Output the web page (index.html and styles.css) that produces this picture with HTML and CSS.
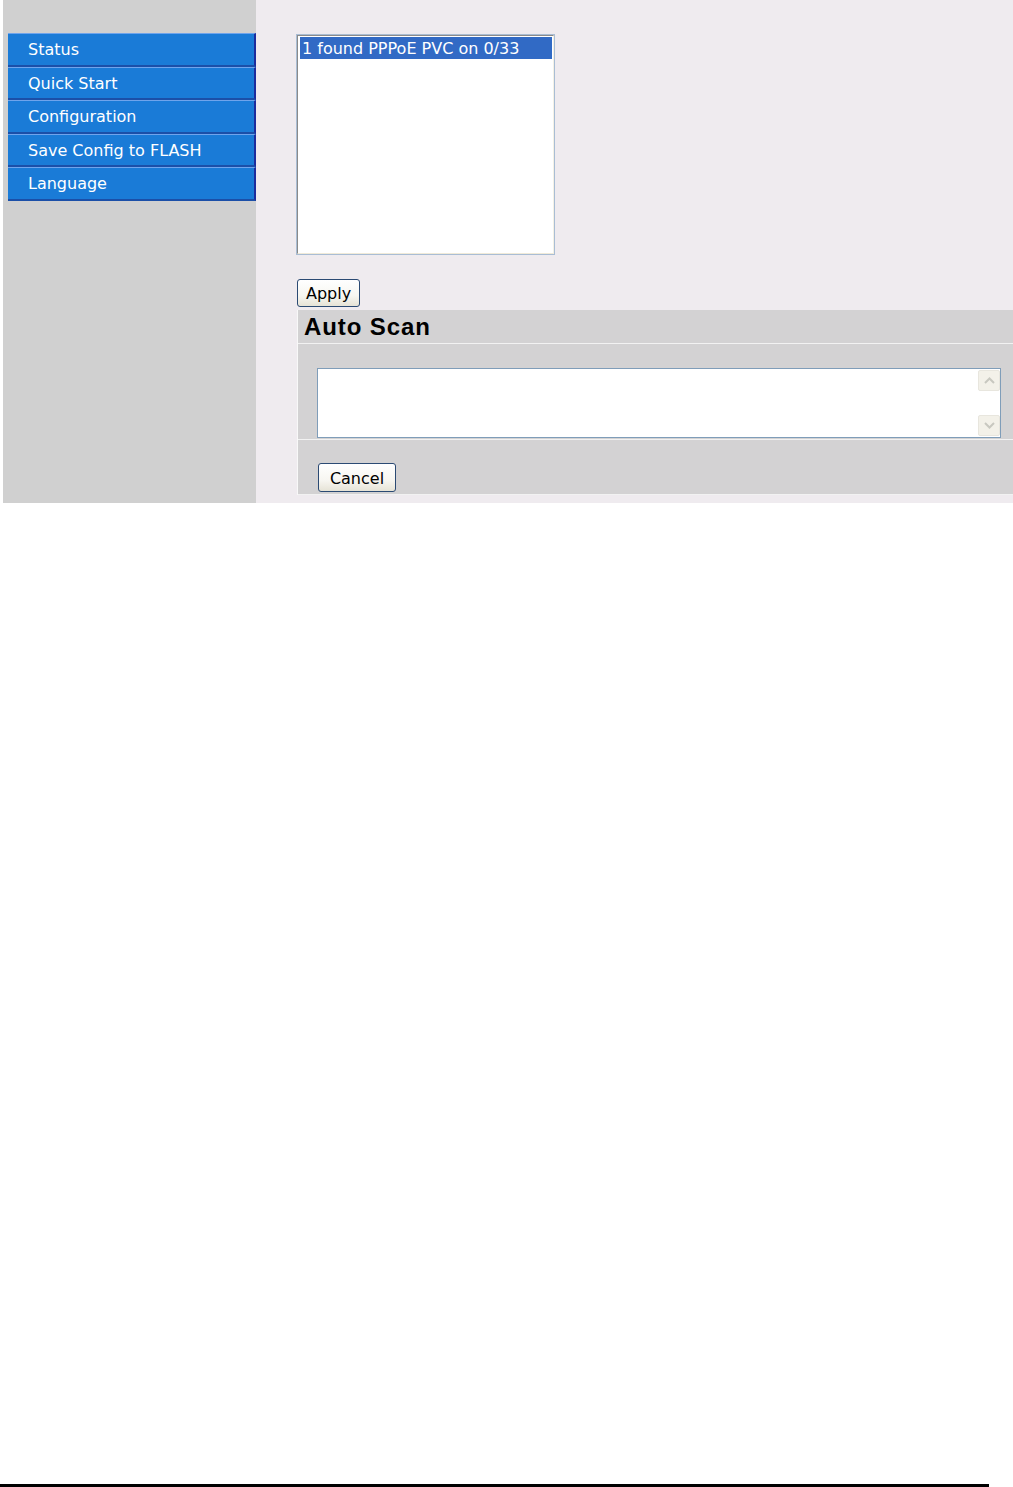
FILE: index.html
```html
<!DOCTYPE html>
<html>
<head>
<meta charset="utf-8">
<link rel="stylesheet" href="styles.css">
</head>
<body>
<div class="page">
  <div class="shot">
    <nav class="sidebar">
      <div class="menu">
        <div class="item">Status</div>
        <div class="item">Quick Start</div>
        <div class="item">Configuration</div>
        <div class="item">Save Config to FLASH</div>
        <div class="item">Language</div>
      </div>
    </nav>
    <main class="content">
      <div class="listbox">
        <div class="listinner">
          <div class="opt sel">1 found PPPoE PVC on 0/33</div>
        </div>
      </div>
      <div class="apply-row"><button class="btn">Apply</button></div>
      <section class="panel">
        <div class="panel-head">Auto Scan</div>
        <div class="panel-body">
          <div class="textarea">
            <div class="ta-text"></div>
            <div class="scroll">
              <div class="sbtn">
                <svg width="11" height="7" viewBox="0 0 11 7"><path d="M1 6 L5.5 1.5 L10 6" fill="none" stroke="#c8c8c0" stroke-width="2"/></svg>
              </div>
              <div class="strack"></div>
              <div class="sbtn">
                <svg width="11" height="7" viewBox="0 0 11 7"><path d="M1 1 L5.5 5.5 L10 1" fill="none" stroke="#c8c8c0" stroke-width="2"/></svg>
              </div>
            </div>
          </div>
        </div>
        <div class="panel-foot"><button class="btn cancel">Cancel</button></div>
      </section>
    </main>
  </div>
  <div class="rule"></div>
</div>
</body>
</html>
```
FILE: styles.css
```css
html, body {
  margin: 0;
  padding: 0;
  background: #ffffff;
}
.page {
  width: 1013px;
}
.shot {
  display: flex;
  height: 503px;
  padding-left: 3px;
}
.sidebar {
  width: 253px;
  background: #d0d0d0;
  padding-top: 33px;
  box-sizing: border-box;
}
.menu {
  margin-left: 5px;
  display: flex;
  flex-direction: column;
}
.item {
  height: 33.6px;
  box-sizing: border-box;
  background: #1a7bd7;
  border-top: 1px solid #6fa4ec;
  border-bottom: 2px solid #1b4fa8;
  border-right: 2px solid #1c2c9c;
  color: #ffffff;
  font-family: "DejaVu Sans", sans-serif;
  font-size: 16px;
  line-height: 32px;
  padding-left: 20px;
  white-space: nowrap;
}
.content {
  flex: 1;
  background: #efebef;
  padding-left: 40px;
  padding-top: 34px;
  box-sizing: border-box;
}
.listbox {
  width: 259px;
  height: 221px;
  box-sizing: border-box;
  border: 1px solid #a9bdd4;
  background: #ffffff;
}
.listinner {
  height: 100%;
  box-sizing: border-box;
  border-top: 1px solid #8a8a8a;
  border-left: 1px solid #8a8a8a;
  border-right: 1px solid #f4f1e6;
  border-bottom: 1px solid #f0ead8;
  padding: 1px 1px 0 2px;
}
.opt {
  height: 22px;
  font-family: "DejaVu Sans", sans-serif;
  font-size: 16px;
  line-height: 24px;
  padding-left: 2px;
  white-space: nowrap;
  color: #000;
  overflow: hidden;
}
.opt.sel {
  background: #316ac5;
  color: #ffffff;
}
.apply-row {
  margin-top: 24px;
  padding-left: 1px;
  height: 31px;
}
.btn {
  font-family: "DejaVu Sans", sans-serif;
  font-size: 16px;
  color: #000;
  height: 28px;
  padding: 2px 8px 0;
  border: 1px solid #2b4a73;
  border-radius: 3px;
  background: linear-gradient(#ffffff 0%, #f7f6f1 60%, #e6e3d6 100%);
  line-height: 24px;
  margin: 0;
}
.cancel {
  width: 78px;
  height: 29px;
}
.panel {
  margin-left: 1px;
  border-left: 1px solid #f8f8f8;
  background: #d3d2d3;
}
.panel-head {
  height: 34px;
  box-sizing: border-box;
  border-bottom: 1px solid #f2f2f2;
  font-family: "Liberation Sans", Arial, sans-serif;
  font-weight: bold;
  font-size: 24px;
  letter-spacing: 0.9px;
  line-height: 34px;
  padding-left: 6px;
  color: #000;
}
.panel-body {
  height: 96px;
  box-sizing: border-box;
  padding: 24px 12px 0 19px;
  border-bottom: 1px solid #f2f2f2;
}
.textarea {
  height: 70px;
  box-sizing: border-box;
  border: 1px solid #7f9db9;
  background: #ffffff;
  display: flex;
}
.ta-text {
  flex: 1;
}
.scroll {
  width: 22px;
  display: flex;
  flex-direction: column;
  padding: 1px 0;
}
.sbtn {
  height: 21px;
  box-sizing: border-box;
  background: #f3f1e9;
  border: 1px solid #e8e6de;
  border-radius: 2px;
  display: flex;
  align-items: center;
  justify-content: center;
}
.strack {
  flex: 1;
}
.panel-foot {
  height: 55px;
  box-sizing: border-box;
  padding: 23px 0 0 20px;
  border-bottom: 1px solid #f2f2f2;
}
.rule {
  margin-top: 981px;
  width: 989px;
  height: 3px;
  background: #000000;
}
```
